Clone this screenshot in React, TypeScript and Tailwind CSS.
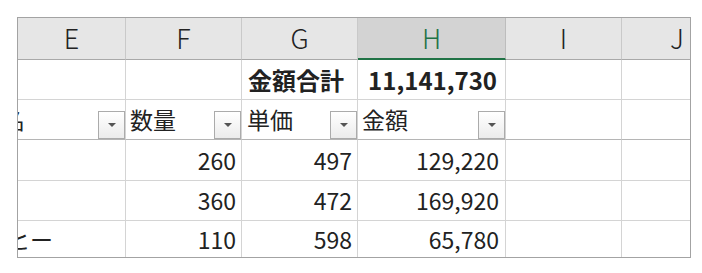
import React from 'react';

const font = { fontFamily: '"Noto Sans CJK JP", "Liberation Sans", sans-serif' };

const cols = ['E', 'F', 'G', 'H', 'I', 'J'];

function Drop() {
  return (
    <div className="self-end shrink-0 w-[27px] h-[28px] border border-[#ababab] bg-gradient-to-b from-white to-[#ececec] flex items-center justify-center">
      <div className="w-0 h-0 border-l-[4px] border-r-[4px] border-t-[4px] border-l-transparent border-r-transparent border-t-[#555]" />
    </div>
  );
}

const rows = [
  ['260', '497', '129,220'],
  ['360', '472', '169,920'],
  ['110', '598', '65,780'],
];

export default function App() {
  const cell = 'border-r border-b border-[#d4d4d4] overflow-hidden flex items-center';
  return (
    <div className="w-[702px] h-[273px] bg-white pt-[17px] pl-[17px] text-[#222]" style={font}>
      <div className="w-[674px] border border-[#a3a3a3] grid grid-cols-[108px_116px_116px_148px_116px_68px]">
        {/* column header */}
        {cols.map((c, i) => (
          <div
            key={c}
            className={
              c === 'H'
                ? 'h-[42px] bg-[#d3d3d3] border-r border-[#bdbdbd] border-b-2 border-b-[#217346] flex items-center justify-center text-[27px] font-light text-[#217346]'
                : `h-[42px] bg-[#e6e6e6] ${i < 5 ? 'border-r' : ''} border-r-[#c9c9c9] border-b border-b-[#a9a9a9] flex items-center justify-center text-[27px] font-light`
            }
          >
            {c === 'J' ? <span className="ml-auto mr-[6px]">J</span> : c}
          </div>
        ))}

        {/* total row */}
        <div className={`${cell} h-[40px]`} />
        <div className={`${cell} h-[40px]`} />
        <div className={`${cell} h-[40px] pl-[6px] text-[24px] font-bold whitespace-nowrap`}>金額合計</div>
        <div className={`${cell} h-[40px] justify-end pr-[8px] text-[24px] font-bold`}>11,141,730</div>
        <div className={`${cell} h-[40px]`} />
        <div className="border-b border-[#d4d4d4] h-[40px]" />

        {/* table header row */}
        <div className="border-r border-r-[#d4d4d4] border-b border-b-[#b5b5b5] h-[40px] flex overflow-hidden text-[23px]">
          <span className="self-center ml-[-39px] whitespace-nowrap">品名</span>
          <div className="flex-1" />
          <Drop />
        </div>
        <div className="border-r border-r-[#d4d4d4] border-b border-b-[#b5b5b5] h-[40px] flex pl-[4px] text-[23px]">
          <span className="self-center">数量</span>
          <div className="flex-1" />
          <Drop />
        </div>
        <div className="border-r border-r-[#d4d4d4] border-b border-b-[#b5b5b5] h-[40px] flex pl-[5px] text-[23px]">
          <span className="self-center">単価</span>
          <div className="flex-1" />
          <Drop />
        </div>
        <div className="border-r border-r-[#d4d4d4] border-b border-b-[#b5b5b5] h-[40px] flex pl-[4px] text-[23px]">
          <span className="self-center">金額</span>
          <div className="flex-1" />
          <Drop />
        </div>
        <div className="border-r border-r-[#d4d4d4] border-b border-b-[#b5b5b5] h-[40px]" />
        <div className="border-b border-b-[#b5b5b5] h-[40px]" />

        {/* data rows */}
        {rows.map((r, ri) => {
          const h = ri === 0 ? 'h-[41px]' : ri === 1 ? 'h-[40px]' : 'h-[36px]';
          const bb = ri === 2 ? 'border-b-0' : '';
          return (
            <React.Fragment key={ri}>
              <div className={`${cell} ${h} ${bb} text-[23px]`}>
                {ri === 2 && <span className="ml-[-57px] whitespace-nowrap">コーヒー</span>}
              </div>
              <div className={`${cell} ${h} ${bb} justify-end pr-[5px] text-[23px]`}>{r[0]}</div>
              <div className={`${cell} ${h} ${bb} justify-end pr-[5px] text-[23px]`}>{r[1]}</div>
              <div className={`${cell} ${h} ${bb} justify-end pr-[6px] text-[23px]`}>{r[2]}</div>
              <div className={`${cell} ${h} ${bb}`} />
              <div className={`border-[#d4d4d4] ${ri === 2 ? '' : 'border-b'} ${h}`} />
            </React.Fragment>
          );
        })}
      </div>
    </div>
  );
}
